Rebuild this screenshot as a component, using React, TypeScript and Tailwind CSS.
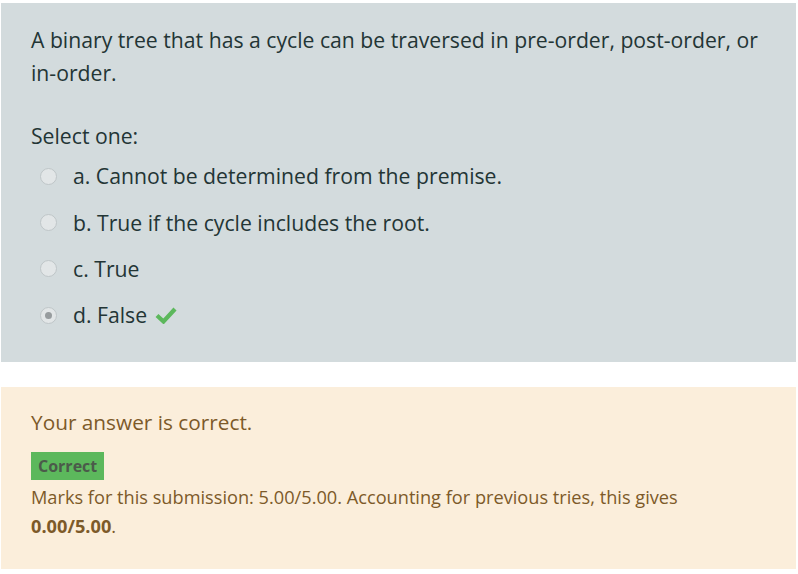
import React from "react";

const font = { fontFamily: '"Segoe UI", "Open Sans", "Noto Sans", sans-serif' };

function Radio({ checked }: { checked?: boolean }) {
  return (
    <span className="relative inline-flex h-[17px] w-[17px] shrink-0 items-center justify-center rounded-full border border-[#bfc6c8] bg-[#e2e6e7]">
      {checked && <span className="h-[7px] w-[7px] rounded-full bg-[#979c9e]" />}
    </span>
  );
}

export default function App() {
  const options = [
    { l: "a. Cannot be determined from the premise." },
    { l: "b. True if the cycle includes the root." },
    { l: "c. True" },
    { l: "d. False", checked: true },
  ];
  return (
    <div className="w-[798px] h-[574px] bg-white pt-[3px] pl-[1px] pr-[2px]" style={font}>
      <div className="bg-[#d3dbdd] pl-[30px] pr-[20px] pt-[20px] h-[359px] text-[#233535]">
        <p className="text-[21.2px] leading-[33px]">
          A binary tree that has a cycle can be traversed in pre-order, post-order, or{" "}
          <span className="whitespace-nowrap">in-order.</span>
        </p>
        <p className="mt-[32px] text-[21.2px] leading-[30px]">Select one:</p>
        <div className="mt-[2px] flex flex-col">
          {options.map((o) => (
            <div key={o.l} className="flex h-[46.3px] items-center pl-[9px]">
              <Radio checked={o.checked} />
              <span className="ml-[16px] text-[21.2px]">{o.l}</span>
              {o.checked && (
                <svg className="ml-[8px]" width="22" height="18" viewBox="0 0 22 18">
                  <path d="M2 9.5 L8.5 15.5 L20 3" stroke="#5cb85c" strokeWidth="4.2" fill="none" strokeLinejoin="miter" />
                </svg>
              )}
            </div>
          ))}
        </div>
      </div>
      <div className="mt-[25px] bg-[#fbeedb] pl-[30px] pr-[20px] pt-[21px] h-[182px] text-[#7d5a29]">
        <p className="text-[20.8px] leading-[28px]">Your answer is correct.</p>
        <div className="mt-[16px]">
          <span className="inline-block bg-[#5cb85c] px-[7px] text-[16px] leading-[28px] font-bold text-[#4b5a4a]">Correct</span>
        </div>
        <p className="mt-[3px] text-[18.2px] leading-[29px]">
          Marks for this submission: 5.00/5.00. Accounting for previous tries, this gives{" "}
          <br />
          <b>0.00/5.00</b>.
        </p>
      </div>
    </div>
  );
}
